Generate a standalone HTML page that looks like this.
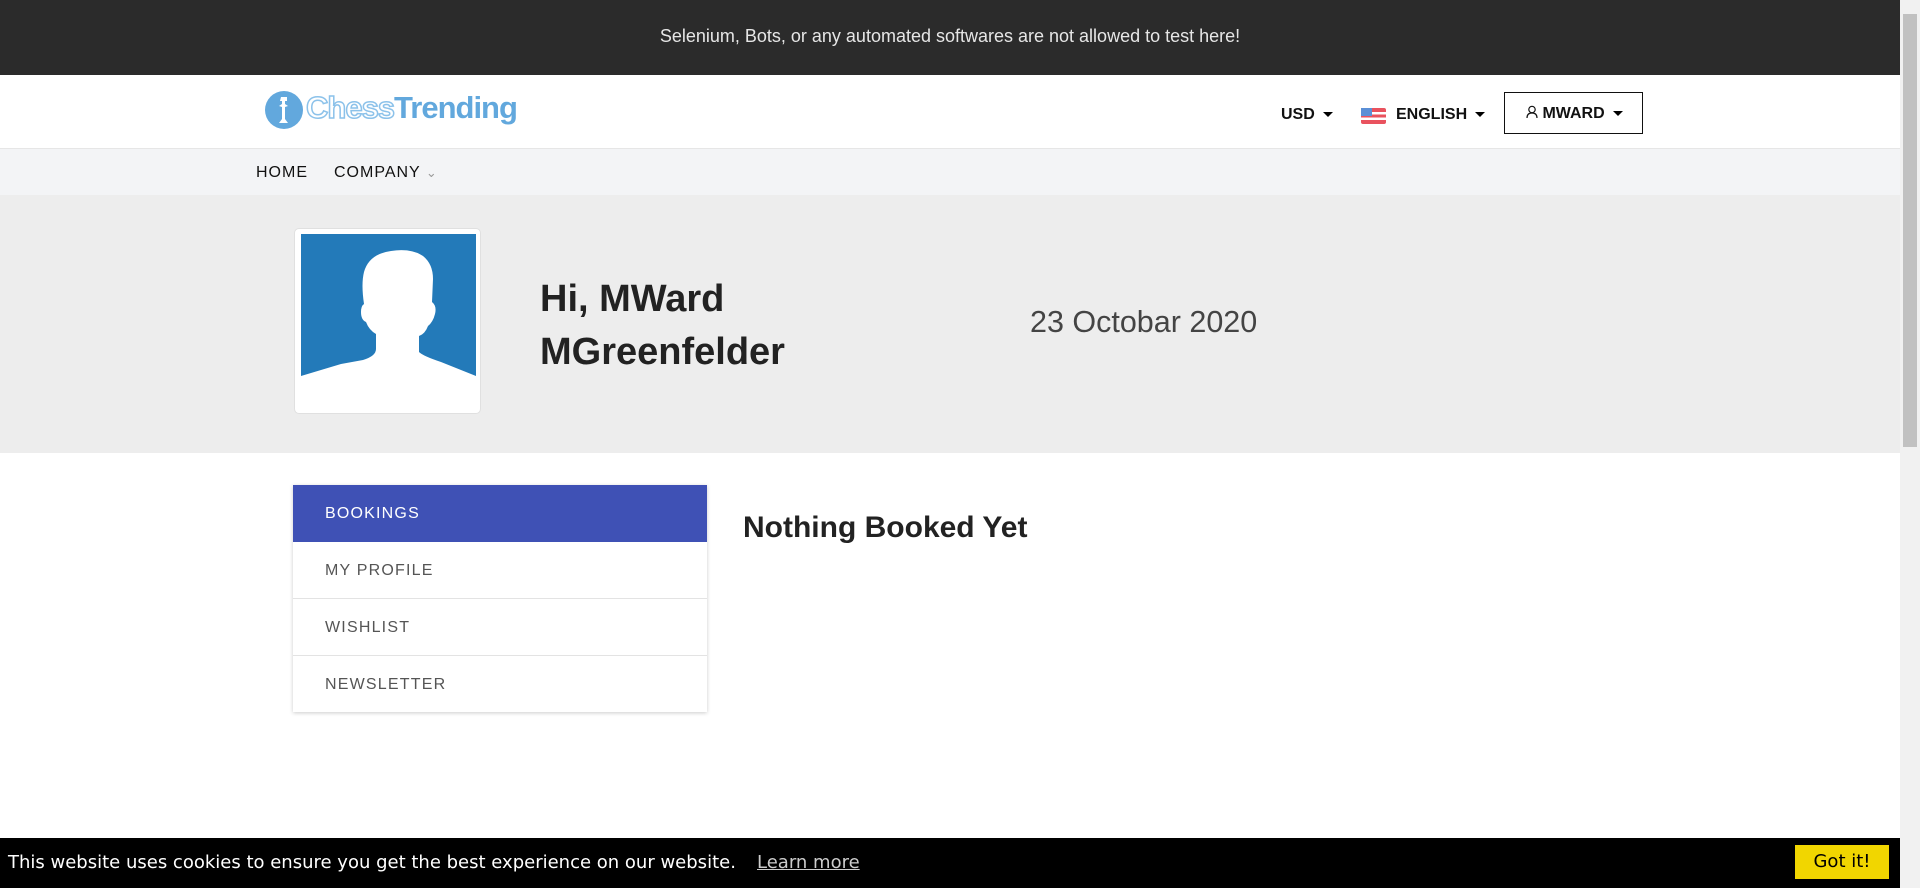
<!DOCTYPE html>
<html><head><meta charset="utf-8"><style>
*{margin:0;padding:0;box-sizing:border-box}
body{width:1920px;height:888px;overflow:hidden;font-family:"Liberation Sans",sans-serif;background:#fff;position:relative}
.top{position:absolute;left:0;top:0;width:1900px;height:75px;background:#2b2b2b;color:#e6e6e6;font-size:18px;text-align:center;line-height:72px}
.hdr{position:absolute;left:0;top:75px;width:1900px;height:74px;background:#fff;border-bottom:1px solid #e6e6e6}
.nav{position:absolute;left:0;top:149px;width:1900px;height:46px;background:#f3f4f6;font-size:16px;letter-spacing:1px;color:#111}
.prof{position:absolute;left:0;top:195px;width:1900px;height:258px;background:#ededed}
.card{position:absolute;left:294px;top:33px;width:187px;height:186px;background:#fff;border-radius:5px;border:1px solid #e0e0e0;overflow:hidden}
.side{position:absolute;left:293px;top:485px;width:414px;height:227px;background:#fff;box-shadow:0 1px 4px rgba(0,0,0,.2)}
.side div{height:57px;line-height:57px;padding-left:32px;font-size:16px;letter-spacing:1.2px;color:#555;border-bottom:1px solid #e3e3e3}
.side div.a{background:#3f51b5;color:#fff;border:none}
.cookie{position:absolute;left:0;top:838px;width:1900px;height:50px;background:#000;color:#fff;font-family:"DejaVu Sans",sans-serif;font-size:18px}
.sb{position:absolute;left:1900px;top:0;width:20px;height:888px;background:#f1f1f1}
.sb i{position:absolute;left:3px;top:14px;width:14px;height:433px;background:#c1c1c1}
.caret{display:inline-block;border-left:5px solid transparent;border-right:5px solid transparent;border-top:5px solid #000;vertical-align:middle;margin-left:8px}
</style></head><body>
<div class="top">Selenium, Bots, or any automated softwares are not allowed to test here!</div>
<div class="hdr">
 <svg style="position:absolute;left:264px;top:15px" width="40" height="40"><circle cx="20" cy="20" r="19" fill="#62a8dd"/><path d="M17 7h6v4h-2v3l3 2-3 1v12l3 4H15l3-4V17l-3-1 3-2v-3h-2z" fill="#fff"/></svg>
 <div style="position:absolute;left:306px;top:15px;font-size:31px;font-weight:bold;letter-spacing:-1px;color:#fff;-webkit-text-stroke:1.5px #8cc2ea">Chess<span style="color:#62a8dd;-webkit-text-stroke:0">Trending</span></div>
 <div style="position:absolute;left:1281px;top:31px;font-size:16px;font-weight:bold;color:#111">USD<span class="caret"></span></div>
 <svg style="position:absolute;left:1361px;top:33px" width="25" height="16"><rect width="25" height="16" rx="2" fill="#e9525e"/><rect y="4" width="25" height="2.5" fill="#fff"/><rect y="9.5" width="25" height="2.5" fill="#fff"/><rect width="11" height="8" fill="#5b8fd6"/></svg>
 <div style="position:absolute;left:1396px;top:31px;font-size:16px;font-weight:bold;color:#111">ENGLISH<span class="caret"></span></div>
 <div style="position:absolute;left:1504px;top:17px;width:139px;height:42px;border:1.5px solid #111;font-size:16px;font-weight:bold;color:#111;line-height:41px;padding-left:21px"><svg width="12" height="14" style="vertical-align:-1px"><circle cx="6" cy="4.5" r="3.2" fill="none" stroke="#111" stroke-width="1.2"/><path d="M1 13c0-4 2.5-5 5-5s5 1 5 5" fill="none" stroke="#111" stroke-width="1.2"/></svg> MWARD<span class="caret"></span></div>
</div>
<div class="nav"><span style="position:absolute;left:256px;top:15px">HOME</span><span style="position:absolute;left:334px;top:15px">COMPANY <span style="color:#999;font-size:13px">&#8964;</span></span></div>
<div class="prof">
 <div class="card"><svg style="position:absolute;left:6px;top:5px" width="175" height="185"><rect width="175" height="185" fill="#237ab9"/><path d="M0 142L40 130L62 126Q75 122 75 115L75 100Q68 96 65 88Q60 86 60 78Q60 72 63 70Q60 50 63 38Q68 20 90 17Q110 14 122 22Q132 30 132 45L131 68Q136 72 134 80Q132 88 127 92Q124 100 118 102L118 118Q122 122 140 128L175 142V185H0Z" fill="#fff"/></svg></div>
 <div style="position:absolute;left:540px;top:78px;font-size:38px;font-weight:bold;color:#222;line-height:53px">Hi, MWard<br>MGreenfelder</div>
 <div style="position:absolute;left:1030px;top:110px;font-size:30.5px;color:#444">23 Octobar 2020</div>
</div>
<div class="side"><div class="a">BOOKINGS</div><div>MY PROFILE</div><div>WISHLIST</div><div style="border:none">NEWSLETTER</div></div>
<div style="position:absolute;left:743px;top:511px;font-size:30px;font-weight:bold;color:#222">Nothing Booked Yet</div>
<div class="cookie"><span style="position:absolute;left:8px;top:14px">This website uses cookies to ensure you get the best experience on our website.</span><span style="position:absolute;left:757px;top:14px;color:#ccc;text-decoration:underline">Learn more</span><div style="position:absolute;left:1795px;top:7px;width:94px;height:34px;background:#f1d600;color:#000;text-align:center;line-height:34px">Got it!</div></div>
<div class="sb"><i></i></div>
</body></html>
